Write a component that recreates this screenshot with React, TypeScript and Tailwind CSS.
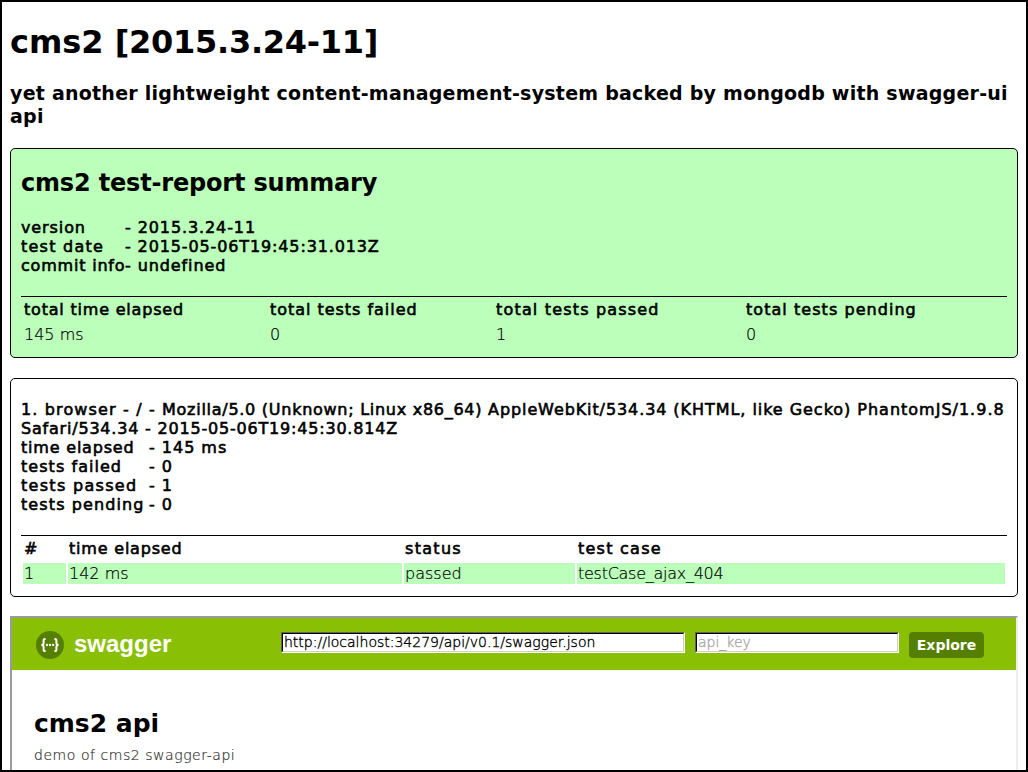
import React from "react";

const summaryInfo = [
  ["version", "- 2015.3.24-11", "tracking-[0.9px]", "tracking-[0.9px]"],
  ["test date", "- 2015-05-06T19:45:31.013Z", "tracking-[1.25px]", "tracking-[0.87px]"],
  ["commit info", "- undefined", "tracking-[0.8px]", "tracking-[0.9px]"],
];

const browserInfo = [
  ["time elapsed", "- 145 ms", "tracking-[0.8px]"],
  ["tests failed", "- 0", "tracking-[1.05px]"],
  ["tests passed", "- 1", "tracking-[1.3px]"],
  ["tests pending", "- 0", "tracking-[1.1px]"],
];

const strong = "[-webkit-text-stroke:0.6px_black] tracking-[0.8px]";
const light = "font-extralight [-webkit-text-stroke:0.2px_black]";

function SwaggerLogo() {
  return (
    <svg width="28" height="28" viewBox="0 0 28 28" className="shrink-0">
      <circle cx="14" cy="14" r="14" fill="#547f00" />
      <g fill="none" stroke="#fff" strokeWidth="2">
        <path d="M9.6 7.9H9Q7.6 7.9 7.6 9.5V12Q7.6 14 5.4 14Q7.6 14 7.6 16V18.5Q7.6 20.1 9 20.1H9.6" />
        <path d="M18.4 7.9H19Q20.4 7.9 20.4 9.5V12Q20.4 14 22.6 14Q20.4 14 20.4 16V18.5Q20.4 20.1 19 20.1H18.4" />
      </g>
      <g fill="#fff">
        <circle cx="10.9" cy="14" r="1.15" />
        <circle cx="14" cy="14" r="1.15" />
        <circle cx="17.1" cy="14" r="1.15" />
      </g>
    </svg>
  );
}

function Field({ className, children }: { className: string; children: React.ReactNode }) {
  return (
    <div className={`mt-[14px] h-[21px] border border-t-[#606060] border-r-white border-b-white border-l-[#606060] ${className}`}>
      <div className="h-[19px] border border-t-black border-r-[#d4d0c8] border-b-[#d4d0c8] border-l-black bg-white pl-px text-[14px] leading-[17px] font-extralight whitespace-nowrap">
        {children}
      </div>
    </div>
  );
}

export default function App() {
  return (
    <main className="h-[772px] w-[1028px] overflow-hidden border-2 border-black bg-white px-2 font-['DejaVu_Sans',sans-serif] text-base leading-[19px] text-black">
      <h1 className="mt-[21px] h-[38px] text-[32px] leading-[38px] font-bold whitespace-nowrap">
        cms2 <span className="tracking-[-0.28px]">[2015.3.24-11]</span>
      </h1>
      <h3 className="mt-[21px] h-[46px] text-[19px] leading-[23px] font-bold tracking-[0.24px]">
        <span className="block whitespace-nowrap">yet another lightweight content-management-system backed by mongodb with swagger-ui</span>
        <span className="block">api</span>
      </h3>

      <section className="mt-[20px] h-[210px] rounded-[5px] border border-black bg-[#bbffbb] px-[10px]">
        <h2 className="mt-[20px] h-[28px] text-[24px] leading-[28px] font-bold tracking-[-0.18px]">cms2 test-report summary</h2>
        <div className="mt-[21px]">
          {summaryInfo.map(([label, value, labelTracking, valueTracking]) => (
            <div key={label} className={`flex h-[19px] whitespace-nowrap ${strong}`}>
              <span className={`w-[104px] ${labelTracking}`}>{label}</span>
              <span className={valueTracking}>{value}</span>
            </div>
          ))}
        </div>
        <div className="mt-[21px] grid grid-cols-[246px_226px_250px_1fr] border-t border-black pt-[3px] pl-[3px]">
          <div className={strong}>total time elapsed</div>
          <div className={strong}>
            <span className="tracking-[0.97px]">total tests failed</span>
          </div>
          <div className={strong}>
            <span className="tracking-[1.18px]">total tests passed</span>
          </div>
          <div className={strong}>
            <span className="tracking-[1.05px]">total tests pending</span>
          </div>
          <span className={`mt-[6px] ${light}`}>145 ms</span>
          <span className={`mt-[6px] ${light}`}>0</span>
          <span className={`mt-[6px] ${light}`}>1</span>
          <span className={`mt-[6px] ${light}`}>0</span>
        </div>
      </section>

      <section className="mt-[20px] h-[219px] rounded-[5px] border border-black px-[10px]">
        <div className={`mt-[21px] whitespace-nowrap ${strong}`}>
          <div>
            <span className="tracking-[1.14px]">1. browser - / - </span>
            <span className="tracking-[0.73px]">Mozilla/5.0 (Unknown; Linux x86_64) </span>
            <span className="tracking-[0.9px]">AppleWebKit/534.34 </span>
            <span className="tracking-[0.96px]">(KHTML, like Gecko) </span>
            <span className="tracking-[1px]">PhantomJS/1.9.8</span>
          </div>
          <div>Safari/534.34 - 2015-05-06T19:45:30.814Z</div>
          {browserInfo.map(([label, value, labelTracking]) => (
            <div key={label} className="flex h-[19px]">
              <span className={`w-[128px] ${labelTracking}`}>{label}</span>
              <span className="tracking-[0.98px]">{value}</span>
            </div>
          ))}
        </div>
        <div className="mt-[21px] border-t border-black px-[2px] pt-[3px]">
          <div className={`grid grid-cols-[45px_336px_173px_1fr] pl-px ${strong}`}>
            <div>#</div>
            <div>time elapsed</div>
            <div>
              <span className="tracking-[1.3px]">status</span>
            </div>
            <div>
              <span className="tracking-[1.25px]">test case</span>
            </div>
          </div>
          <div className={`mt-[5px] grid h-[21px] grid-cols-[43px_334px_171px_1fr] gap-x-[2px] leading-[21px] ${light}`}>
            <span className="bg-[#bbffbb] pl-px">1</span>
            <span className="bg-[#bbffbb] pl-px">142 ms</span>
            <span className="bg-[#bbffbb] pl-px">passed</span>
            <span className="bg-[#bbffbb] pl-px tracking-[-0.27px]">testCase_ajax_404</span>
          </div>
        </div>
      </section>

      <section className="mt-[19px] h-[200px] border-2 border-t-[#9a9a9a] border-r-[#eeeeee] border-b-[#eeeeee] border-l-[#9a9a9a]">
        <header className="flex h-[52px] items-start bg-[#89bf04] pl-6">
          <div className="mt-[13px] flex h-[28px] w-[245px] items-center gap-[10px]">
            <SwaggerLogo />
            <span className="font-['Liberation_Sans',sans-serif] text-[24px] leading-[26px] h-[28px] font-bold text-white">swagger</span>
          </div>
          <Field className="w-[404px]">
            <span className="[-webkit-text-stroke:0.35px_black]">http://localhost:34279/api/v0.1/swagger.json</span>
          </Field>
          <Field className="ml-[10px] w-[204px]">
            <span className="text-[#a9a9a9] [-webkit-text-stroke:0.35px_#a9a9a9]">api_key</span>
          </Field>
          <div className="mt-[14px] ml-[10px] h-[26px] w-[75px] rounded-[4px] bg-[#547f00] text-center text-[14px] leading-[26px] font-bold text-white">Explore</div>
        </header>
        <div className="pl-[22px]">
          <h2 className="mt-[39px] text-[25px] leading-[30px] font-bold">cms2 api</h2>
          <p className="mt-[7px] text-[14px] leading-[18px] font-extralight tracking-[0.55px] text-[#333333] [-webkit-text-stroke:0.2px_#333333]">demo of cms2 swagger-api</p>
        </div>
      </section>
    </main>
  );
}
